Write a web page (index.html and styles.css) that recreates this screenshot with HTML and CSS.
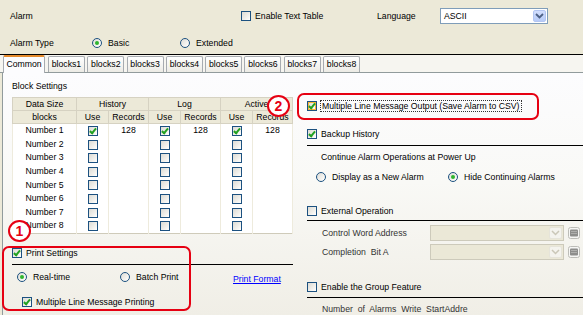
FILE: index.html
```html
<!DOCTYPE html>
<html lang="en">
<head>
    <meta charset="UTF-8">
    <meta name="viewport" content="width=device-width, initial-scale=1.0">
    <title>Alarm Settings</title>
    <link rel="stylesheet" href="styles.css">
</head>
<body>
    <div class="top">
        <div class="top-row first">
            <span class="caption cap-alarm">Alarm</span>
            <label class="check cap-enable"><span class="cb"></span>Enable Text Table</label>
            <span class="caption cap-lang">Language</span>
            <div class="combo">
                <span class="combo-text">ASCII</span>
                <span class="combo-btn"><svg width="9" height="6" viewBox="0 0 9 6"><path d="M1 1 L4.5 4.5 L8 1" fill="none" stroke="#4D6185" stroke-width="1.8"/></svg></span>
            </div>
        </div>
        <div class="top-row second">
            <span class="caption cap-type">Alarm Type</span>
            <label class="radio cap-basic"><span class="rb on"></span>Basic</label>
            <label class="radio"><span class="rb"></span>Extended</label>
        </div>
    </div>

    <div class="tabs">
        <div class="tab active">Common</div>
        <div class="tab">blocks1</div>
        <div class="tab">blocks2</div>
        <div class="tab">blocks3</div>
        <div class="tab">blocks4</div>
        <div class="tab">blocks5</div>
        <div class="tab">blocks6</div>
        <div class="tab">blocks7</div>
        <div class="tab">blocks8</div>
    </div>

    <div class="page">
        <div class="col-left">
            <div class="group-title">Block Settings</div>
            <table class="grid">
                <colgroup>
                    <col class="c-size"><col class="c-use"><col class="c-rec">
                    <col class="c-use"><col class="c-rec">
                    <col class="c-use"><col class="c-rec">
                </colgroup>
                <tr class="head">
                    <th>Data Size</th>
                    <th colspan="2">History</th>
                    <th colspan="2">Log</th>
                    <th colspan="2">Active</th>
                </tr>
                <tr class="head">
                    <th>blocks</th>
                    <th>Use</th><th>Records</th>
                    <th>Use</th><th>Records</th>
                    <th>Use</th><th>Records</th>
                </tr>
                <tr><td>Number 1</td><td><span class="cb on"></span></td><td>128</td><td><span class="cb on"></span></td><td>128</td><td><span class="cb on"></span></td><td>128</td></tr>
                <tr><td>Number 2</td><td><span class="cb"></span></td><td></td><td><span class="cb"></span></td><td></td><td><span class="cb"></span></td><td></td></tr>
                <tr><td>Number 3</td><td><span class="cb"></span></td><td></td><td><span class="cb"></span></td><td></td><td><span class="cb"></span></td><td></td></tr>
                <tr><td>Number 4</td><td><span class="cb"></span></td><td></td><td><span class="cb"></span></td><td></td><td><span class="cb"></span></td><td></td></tr>
                <tr><td>Number 5</td><td><span class="cb"></span></td><td></td><td><span class="cb"></span></td><td></td><td><span class="cb"></span></td><td></td></tr>
                <tr><td>Number 6</td><td><span class="cb"></span></td><td></td><td><span class="cb"></span></td><td></td><td><span class="cb"></span></td><td></td></tr>
                <tr><td>Number 7</td><td><span class="cb"></span></td><td></td><td><span class="cb"></span></td><td></td><td><span class="cb"></span></td><td></td></tr>
                <tr><td>Number 8</td><td><span class="cb"></span></td><td></td><td><span class="cb"></span></td><td></td><td><span class="cb"></span></td><td></td></tr>
            </table>

            <label class="check print-row"><span class="cb on"></span>Print Settings</label>
            <div class="sep"></div>
            <div class="print-options">
                <label class="radio w-real"><span class="rb on"></span>Real-time</label>
                <label class="radio w-batch"><span class="rb"></span>Batch Print</label>
                <a class="link" href="#">Print Format</a>
            </div>
            <label class="check multi-print"><span class="cb on"></span>Multiple Line Message Printing</label>
        </div>

        <div class="col-right">
            <label class="check csv-row"><span class="cb on hot"></span><span class="focus">Multiple Line Message Output (Save Alarm to CSV)</span></label>
            <label class="check backup-row"><span class="cb on"></span>Backup History</label>
            <div class="sep"></div>
            <div class="sub-title">Continue Alarm Operations at Power Up</div>
            <div class="power-options">
                <label class="radio w-display"><span class="rb"></span>Display as a New Alarm</label>
                <label class="radio"><span class="rb on"></span>Hide Continuing Alarms</label>
            </div>
            <label class="check external-row"><span class="cb"></span>External Operation</label>
            <div class="sep"></div>
            <div class="field first-field">
                <span class="field-label">Control Word Address</span>
                <div class="combo disabled"><span class="combo-btn"><svg width="9" height="6" viewBox="0 0 9 6"><path d="M1 1 L4.5 4.5 L8 1" fill="none" stroke="#CAC7B8" stroke-width="1.5"/></svg></span></div>
                <span class="pick"><svg width="12" height="12" viewBox="0 0 12 12"><rect x="0.5" y="0.5" width="11" height="11" rx="2" fill="#F6F6F4" stroke="#BDBDB8"/><rect x="2" y="2.5" width="8" height="7" rx="1" fill="#8E8E8C"/><path d="M3 4.5h6M3 6.5h6" stroke="#B8B8B6" stroke-width="0.8"/></svg></span>
            </div>
            <div class="field">
                <span class="field-label">Completion&nbsp; Bit A</span>
                <div class="combo disabled"><span class="combo-btn"><svg width="9" height="6" viewBox="0 0 9 6"><path d="M1 1 L4.5 4.5 L8 1" fill="none" stroke="#CAC7B8" stroke-width="1.5"/></svg></span></div>
                <span class="pick"><svg width="12" height="12" viewBox="0 0 12 12"><rect x="0.5" y="0.5" width="11" height="11" rx="2" fill="#F6F6F4" stroke="#BDBDB8"/><rect x="2" y="2.5" width="8" height="7" rx="1" fill="#8E8E8C"/><path d="M3 4.5h6M3 6.5h6" stroke="#B8B8B6" stroke-width="0.8"/></svg></span>
            </div>
            <label class="check group-row"><span class="cb"></span>Enable the Group Feature</label>
            <div class="sep"></div>
            <div class="sub-title count-row">Number&nbsp; of&nbsp; Alarms&nbsp; Write&nbsp; StartAddre</div>
        </div>

        <!-- annotation marks -->
        <div class="mark-circle mark-two">2</div>
        <div class="mark-box box-two"></div>
        <div class="mark-circle mark-one">1</div>
        <div class="mark-box box-one"></div>
    </div>
</body>
</html>
```

FILE: styles.css
```css
body {
    margin: 0;
    background-color: #ECE9D8;
    font-family: "Liberation Sans", Arial, sans-serif;
    font-size: 8.7px;
    color: #000;
    overflow: hidden;
    width: 583px;
    height: 315px;
}

/* top settings */
.top {
    height: 54px;
    padding-left: 10px;
}
.top-row {
    display: flex;
    align-items: center;
}
.top-row.first {
    padding-top: 8px;
    height: 16px;
}
.top-row.second {
    margin-top: 12px;
    height: 14px;
}
.cap-alarm { width: 231px; }
.cap-enable { width: 136px; }
.cap-lang { width: 63px; }
.cap-type { width: 82px; }
.cap-basic { width: 88px; }

.check, .radio {
    display: flex;
    align-items: center;
    gap: 4px;
    height: 12px;
    white-space: nowrap;
}
.radio {
    gap: 6px;
}
.cb {
    box-sizing: border-box;
    display: inline-block;
    flex: none;
    position: relative;
    width: 10px;
    height: 10px;
    border: 1px solid #1C5180;
    background: linear-gradient(135deg, #DCDBD5 0%, #EFEEE9 55%, #FFFFFF 100%);
}
.cb.on::after {
    content: "";
    position: absolute;
    left: 2px;
    top: 0px;
    width: 2px;
    height: 5px;
    border: solid #21A121;
    border-width: 0 2px 2px 0;
    transform: rotate(40deg);
}
.cb.hot {
    box-shadow: inset 0 0 0 1px #F8B636;
}
.rb {
    box-sizing: border-box;
    display: inline-block;
    flex: none;
    position: relative;
    width: 10px;
    height: 10px;
    border: 1px solid #1C5180;
    border-radius: 50%;
    background: linear-gradient(135deg, #DCDBD5 0%, #F4F3EF 60%, #FFFFFF 100%);
}
.rb.on::after {
    content: "";
    position: absolute;
    left: 2px;
    top: 2px;
    width: 4px;
    height: 4px;
    border-radius: 50%;
    background: #2FB52F;
}

.combo {
    box-sizing: border-box;
    display: flex;
    align-items: center;
    justify-content: space-between;
    width: 108px;
    height: 16px;
    border: 1px solid #7F9DB9;
    background: #fff;
    padding: 0 1px 0 3px;
}
.combo-btn {
    box-sizing: border-box;
    display: flex;
    align-items: center;
    justify-content: center;
    width: 13px;
    height: 12px;
    border: 1px solid #B3C6F2;
    border-radius: 2px;
    background: linear-gradient(#D2DEFD, #B7CBF7);
}
.combo.disabled {
    width: 134px;
    border-color: #CDCABB;
    background: #EBE8D7;
    justify-content: flex-end;
}
.combo.disabled .combo-btn {
    border-color: #E6E4DA;
    background: #F4F3EE;
}

/* tabs */
.tabs {
    display: flex;
    align-items: flex-end;
    height: 17px;
    padding-left: 3px;
    border-top: 1px solid #000;
    border-bottom: 1px solid #919B9C;
    background: #F6F5F0;
}
.tab {
    box-sizing: border-box;
    width: 37px;
    height: 16px;
    margin-left: 2.3px;
    border: 1px solid #A7ABB0;
    border-bottom: none;
    border-radius: 2px 2px 0 0;
    background: linear-gradient(#FFFFFF, #ECEBE5);
    text-align: center;
    line-height: 14px;
}
.tab.active {
    width: 42px;
    height: 18px;
    margin-left: 0;
    margin-right: 0.7px;
    margin-bottom: -1px;
    border-top: 2px solid #E68B2C;
    background: #FCFCFE;
    line-height: 15px;
    position: relative;
}

/* tab page */
.page {
    position: relative;
    display: flex;
    height: 242px;
    margin-left: 2px;
    border-left: 1px solid #919B9C;
    background: linear-gradient(#FCFCFE 0%, #F9F9F6 45%, #F0EEE6 100%);
}
.col-left {
    width: 282px;
    flex: none;
    padding-left: 9px;
}
.col-right {
    flex: 1;
    padding-left: 13px;
}
.sep {
    height: 1px;
    background: #000;
}

.group-title {
    margin-top: 7px;
    line-height: 12px;
}
.grid {
    margin-top: 5px;
    width: 281px;
    border-collapse: collapse;
    table-layout: fixed;
    background: #fff;
    border: 1px solid #CFCBBA;
}
.c-size { width: 64px; }
.c-use { width: 32px; }
.c-rec { width: 40px; }
.grid th {
    height: 12px;
    padding: 0;
    font-weight: normal;
    background: #ECE9D8;
    border: 1px solid #D6D2C2;
    line-height: 12px;
}
.grid td {
    height: 13.6px;
    padding: 0;
    text-align: center;
    line-height: 13px;
    border-left: 1px solid #EEEBDD;
    border-right: 1px solid #EEEBDD;
}
.grid td .cb {
    vertical-align: middle;
}

.print-row {
    margin-top: 13px;
}
.col-left .sep {
    margin-top: 5px;
    width: 281px;
}
.print-options {
    display: flex;
    align-items: center;
    margin-top: 6px;
    height: 12px;
}
.w-real {
    width: 103px;
    margin-left: 5px;
}
.w-batch {
    width: 113px;
}
.link {
    color: #0000FF;
    text-decoration: underline;
    margin-top: 4px;
}
.multi-print {
    margin-top: 13px;
    margin-left: 10px;
}

.csv-row {
    margin-top: 27px;
}
.focus {
    outline: 1px dotted #333;
    outline-offset: 0;
    padding: 0 1px;
}
.backup-row {
    margin-top: 16px;
}
.col-right .sep {
    margin-top: 5px;
}
.sub-title {
    margin-top: 5px;
    padding-left: 14px;
    line-height: 12px;
    white-space: nowrap;
}
.power-options {
    display: flex;
    align-items: center;
    height: 12px;
    margin-top: 8px;
    padding-left: 9px;
}
.w-display {
    width: 132px;
}
.external-row {
    margin-top: 22px;
}
.external-row + .sep {
    margin-top: 3px;
}
.field {
    display: flex;
    align-items: center;
    margin-top: 3px;
    padding-left: 15px;
    height: 16px;
}
.first-field {
    margin-top: 4px;
}
.field-label {
    width: 108px;
    color: #333;
}
.pick {
    display: flex;
    margin-left: 4px;
}
.group-row {
    margin-top: 21px;
}
.group-row + .sep {
    margin-top: 4px;
}
.count-row {
    padding-left: 15px;
    color: #333;
}

/* red annotation marks */
.mark-circle {
    position: absolute;
    box-sizing: border-box;
    width: 23px;
    height: 22px;
    border: 2px solid #E60012;
    border-radius: 50%;
    background: #fff;
    color: #E60012;
    font-weight: bold;
    font-size: 14px;
    line-height: 18px;
    text-align: center;
}
.mark-two {
    left: 264px;
    top: 22px;
}
.mark-one {
    left: 5px;
    top: 147px;
}
.mark-box {
    position: absolute;
    box-sizing: border-box;
    border: 2px solid #E60012;
    border-radius: 7px;
}
.box-two {
    left: 294px;
    top: 20px;
    width: 242px;
    height: 27px;
}
.box-one {
    left: -1px;
    top: 173px;
    width: 189px;
    height: 65px;
}
```
